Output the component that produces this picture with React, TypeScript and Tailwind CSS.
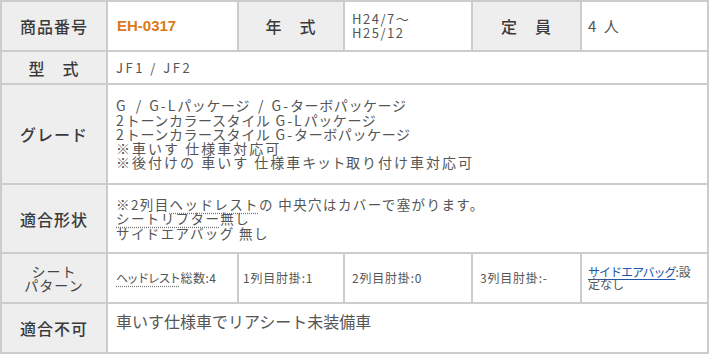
import React from "react";

const head = "flex items-center justify-center bg-[#eeeeee] text-[16px] font-medium tracking-[1px] text-[#3a3a3a]";
const cell = "flex items-center bg-white px-[8px] text-[#555]";

// katakana runs are set tighter than kanji / kana / latin, as in the reference
function Spaced({ text, kata = "tracking-[0.6px]", rest = "tracking-[2px]" }: { text: string; kata?: string; rest?: string }) {
  const runs = text.match(/[\u30A0-\u30FF]+|[^\u30A0-\u30FF]+/g) ?? [];
  return (
    <>
      {runs.map((r, i) => (
        <span key={i} className={/[\u30A0-\u30FF]/.test(r) ? kata : rest}>
          {r}
        </span>
      ))}
    </>
  );
}

const dotted = "underline decoration-dotted decoration-[#777] underline-offset-[3px]";

function Seat({ children, pad }: { children: React.ReactNode; pad: string }) {
  return <div className={`${cell} ${pad} whitespace-nowrap text-[12px] tracking-[0.8px]`}>{children}</div>;
}

export default function App() {
  return (
    <div className="w-[709px] h-[354px] bg-white font-['Noto_Sans_CJK_JP','Noto_Sans',sans-serif]">
      <div className="grid h-full grid-cols-[104px_129px_104px_126px_107px_125px] grid-rows-[48px_31px_98px_67px_48px_48px] gap-[2px] bg-[#cccccc] p-[2px]">
        {/* row 1 */}
        <div className={head}>商品番号</div>
        <div className={`${cell} pl-[9px]`}>
          <span className="font-['Liberation_Sans',sans-serif] text-[15px] font-bold text-[#d97a1c]">EH-0317</span>
        </div>
        <div className={head}>年　式</div>
        <div className={`${cell} pl-[7px]`}>
          <div className="text-[13px] leading-[14px] tracking-[1.5px]">
            H24/7～
            <br />
            H25/12
          </div>
        </div>
        <div className={head}>定　員</div>
        <div className={`${cell} pl-[6px]`}>
          <span className="text-[15px] tracking-[2px]">4 人</span>
        </div>

        {/* row 2 */}
        <div className={head}>型　式</div>
        <div className={`${cell} col-span-5`}>
          <span className="text-[13px] tracking-[2.5px]">JF1 / JF2</span>
        </div>

        {/* row 3 */}
        <div className={head}>グレード</div>
        <div className={`${cell} col-span-5`}>
          <div className="whitespace-nowrap text-[14px] leading-[14.3px]">
            <div>
              <Spaced text="G" />
              <span className="mx-[8px]">/</span>
              <Spaced text="G-Lパッケージ" />
              <span className="mx-[8px]">/</span>
              <Spaced text="G-ターボパッケージ" />
            </div>
            <div><Spaced text="2トーンカラースタイル G-Lパッケージ" /></div>
            <div><Spaced text="2トーンカラースタイル G-ターボパッケージ" /></div>
            <div><Spaced text="※車いす 仕様車対応可" /></div>
            <div><Spaced text="※後付けの 車いす 仕様車キット取り付け車対応可" /></div>
          </div>
        </div>

        {/* row 4 */}
        <div className={head}>適合形状</div>
        <div className={`${cell} col-span-5`}>
          <div className="whitespace-nowrap text-[13.5px] leading-[14.5px] tracking-[1.4px]">
            <div>
              ※2列目<span className={dotted}>ヘッドレスト</span>の 中央穴はカバーで塞がります。
            </div>
            <div>
              <span className={dotted}>シートリフター</span>無し
            </div>
            <div>サイドエアバッグ 無し</div>
          </div>
        </div>

        {/* row 5 */}
        <div className="flex flex-col items-center justify-center bg-[#eeeeee] text-[14px] leading-[14px] tracking-[1px] text-[#444]">
          <span>シート</span>
          <span>パターン</span>
        </div>
        <Seat pad="pl-[8px]">
          <span className={dotted}>
            <Spaced text="ヘッドレスト" kata="tracking-[-1.4px]" rest="" />
          </span>
          <span className="ml-[1px] tracking-[0.4px]">総数:4</span>
        </Seat>
        <Seat pad="pl-[4px]">1列目肘掛:1</Seat>
        <Seat pad="pl-[7px]">2列目肘掛:0</Seat>
        <Seat pad="pl-[7px]">3列目肘掛:-</Seat>
        <div className={`${cell} pl-[6px] pr-[2px] whitespace-nowrap text-[12px] leading-[12.5px]`}>
          <span>
            <span className="text-[#2255aa] underline underline-offset-[2px]">
              <Spaced text="サイドエアバッグ" kata="tracking-[-1px]" rest="" />
            </span>
            :設
            <br />
            定なし
          </span>
        </div>

        {/* row 6 */}
        <div className={head}>適合不可</div>
        <div className={`${cell} col-span-5 items-start pt-[7px]`}>
          <span className="text-[16px] leading-[20px]">車いす仕様車でリアシート未装備車</span>
        </div>
      </div>
    </div>
  );
}
